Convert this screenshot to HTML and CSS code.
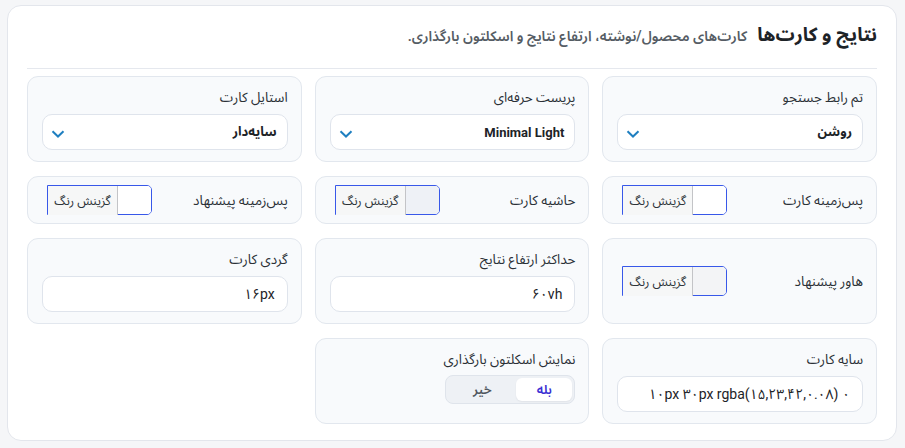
FILE: index.html
```html
<!DOCTYPE html>
<html lang="fa" dir="rtl">
<head>
<meta charset="utf-8">
<title>نتایج و کارت‌ها</title>
<link rel="stylesheet" href="styles.css">
</head>
<body>
<section class="card">
  <header class="card-head">
    <h2 class="title">نتایج و کارت‌ها</h2>
    <p class="subtitle">کارت‌های محصول/نوشته، ارتفاع نتایج و اسکلتون بارگذاری.</p>
  </header>
  <div class="grid">
    <div class="field">
      <div class="label">تم رابط جستجو</div>
      <div class="select"><span class="select-value">روشن</span><svg class="chev" width="14" height="8" viewBox="0 0 14 8"><path d="M1.5 1.2 L7 6.5 L12.5 1.2" fill="none" stroke="#1f7fc0" stroke-width="2"/></svg></div>
    </div>
    <div class="field">
      <div class="label">پریست حرفه‌ای</div>
      <div class="select"><span class="select-value latin">Minimal Light</span><svg class="chev" width="14" height="8" viewBox="0 0 14 8"><path d="M1.5 1.2 L7 6.5 L12.5 1.2" fill="none" stroke="#1f7fc0" stroke-width="2"/></svg></div>
    </div>
    <div class="field">
      <div class="label">استایل کارت</div>
      <div class="select"><span class="select-value">سایه‌دار</span><svg class="chev" width="14" height="8" viewBox="0 0 14 8"><path d="M1.5 1.2 L7 6.5 L12.5 1.2" fill="none" stroke="#1f7fc0" stroke-width="2"/></svg></div>
    </div>

    <div class="field inline">
      <div class="label">پس‌زمینه کارت</div>
      <div class="picker"><span class="swatch sw-white"></span><span class="picker-text">گزینش رنگ</span></div>
    </div>
    <div class="field inline">
      <div class="label">حاشیه کارت</div>
      <div class="picker"><span class="swatch sw-border"></span><span class="picker-text">گزینش رنگ</span></div>
    </div>
    <div class="field inline">
      <div class="label">پس‌زمینه پیشنهاد</div>
      <div class="picker"><span class="swatch sw-white"></span><span class="picker-text">گزینش رنگ</span></div>
    </div>

    <div class="field inline">
      <div class="label">هاور پیشنهاد</div>
      <div class="picker"><span class="swatch sw-hover"></span><span class="picker-text">گزینش رنگ</span></div>
    </div>
    <div class="field">
      <div class="label">حداکثر ارتفاع نتایج</div>
      <div class="input">۶۰vh</div>
    </div>
    <div class="field">
      <div class="label">گردی کارت</div>
      <div class="input">۱۶px</div>
    </div>

    <div class="field">
      <div class="label">سایه کارت</div>
      <div class="input">۰ ۱۰px ۳۰px rgba(۱۵,۲۳,۴۲,۰.۰۸)</div>
    </div>
    <div class="field">
      <div class="label">نمایش اسکلتون بارگذاری</div>
      <div class="seg"><span class="seg-opt active">بله</span><span class="seg-opt">خیر</span></div>
    </div>
  </div>
</section>
</body>
</html>
```
FILE: styles.css
```css
html, body {
  margin: 0;
  padding: 0;
}
body {
  background: #f5f6f8;
  padding: 5px 8px 0 7px;
  font-family: Roboto, "Noto Sans Arabic", "DejaVu Sans", sans-serif;
  color: #1d2327;
}
.card {
  background: #fff;
  border: 1px solid #e3e6ec;
  border-radius: 14px;
  padding: 0 19px 17px 19px;
  height: 436px;
  box-sizing: border-box;
}
.card-head {
  display: flex;
  align-items: baseline;
  gap: 10px;
  padding-top: 16px;
  padding-bottom: 20px;
  border-bottom: 1px solid #e5e8ee;
  height: 26px;
}
.title {
  margin: 0;
  font-size: 19px;
  font-weight: 700;
  line-height: 26px;
  color: #1d2327;
  white-space: nowrap;
}
.subtitle {
  margin: 0;
  font-size: 14px;
  font-weight: 600;
  color: #555c64;
  white-space: nowrap;
}
.grid {
  margin-top: 7px;
  display: grid;
  grid-template-columns: repeat(3, 1fr);
  column-gap: 13px;
  row-gap: 14px;
  grid-template-rows: 86px 48px 86px 86px;
}
.field {
  background: #f8fafc;
  border: 1px solid #e2e7ee;
  border-radius: 11px;
  padding: 10px 13px 0 14px;
  box-sizing: border-box;
  display: flex;
  flex-direction: column;
}
.field.inline {
  flex-direction: row;
  align-items: center;
  justify-content: space-between;
  padding: 0 13px 0 19px;
}
.label {
  font-size: 13.5px;
  font-weight: 400;
  line-height: 20px;
  color: #2a3036;
  margin-bottom: 7px;
  white-space: nowrap;
}
.field.inline .label {
  margin-bottom: 0;
}
.select, .input {
  height: 36px;
  box-sizing: border-box;
  background: #fff;
  border: 1px solid #dfe4ec;
  border-radius: 10px;
  display: flex;
  align-items: center;
}
.select {
  padding: 0 10px 0 8px;
}
.select-value {
  font-size: 13px;
  font-weight: 700;
  color: #1d2327;
}
.select-value.latin {
  direction: ltr;
}
.chev {
  margin-right: auto;
  margin-top: 4px;
}
.input {
  padding: 0 12px;
  font-size: 14px;
  color: #1d2327;
  white-space: nowrap;
}
.picker {
  display: flex;
  height: 30px;
  box-sizing: border-box;
  border: 1px solid #3858e9;
  border-radius: 0 5px 5px 0;
}
.swatch {
  width: 33px;
  border-radius: 0 4px 4px 0;
}
.sw-white { background: #fff; }
.sw-border { background: #eef1f6; }
.sw-hover { background: #f3f4f6; }
.picker-text {
  width: 69px;
  margin-bottom: -1px;
  background: #f6f7f7;
  border-right: 1px solid #c3c4c7;
  font-size: 12.5px;
  color: #2c3338;
  display: flex;
  align-items: center;
  justify-content: center;
  white-space: nowrap;
}
.seg {
  align-self: flex-start;
  margin-top: -1px;
  display: flex;
  padding: 2px;
  background: #eef1f5;
  border: 1px solid #dfe4eb;
  border-radius: 8px;
  height: 29px;
  box-sizing: border-box;
}
.seg-opt {
  display: flex;
  align-items: center;
  justify-content: center;
  width: 68px;
  font-size: 13px;
  font-weight: 600;
  color: #50575e;
  border-radius: 6px;
}
.seg-opt.active {
  width: 56px;
  background: #fff;
  color: #3b2fd3;
  box-shadow: 0 1px 2px rgba(15, 23, 42, 0.06);
}
```
